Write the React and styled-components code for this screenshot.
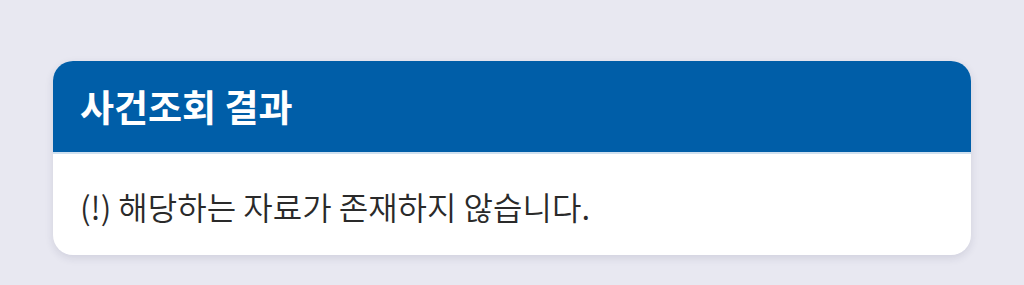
import React from "react";
import styled, { createGlobalStyle } from "styled-components";

const GlobalStyle = createGlobalStyle`
  html, body {
    margin: 0;
    padding: 0;
    background: #e8e8f1;
  }
  body {
    font-family: "Noto Sans CJK KR", "Noto Sans", sans-serif;
  }
`;

const Page = styled.div`
  height: 285px;
  box-sizing: border-box;
  padding: 61px 53px 0 53px;
`;

const Card = styled.section`
  background: #ffffff;
  border-radius: 20px;
  overflow: hidden;
  box-shadow: 0 3px 8px rgba(40, 40, 80, 0.12);
`;

const Header = styled.header`
  height: 91px;
  background: #005ea8;
  border-bottom: 2px solid #cfe0ef;
  display: flex;
  align-items: center;
  padding: 0 27px;
`;

const Title = styled.h2`
  margin: 0;
  color: #ffffff;
  font-size: 37px;
  font-weight: 700;
  letter-spacing: 0;
  line-height: 1;
`;

const Body = styled.div`
  height: 101px;
  display: flex;
  align-items: center;
  padding: 0 27px;
  box-sizing: border-box;
`;

const Message = styled.p`
  margin: 0;
  color: #2a2a2a;
  font-size: 32px;
  font-weight: 350;
  line-height: 1;
  padding-top: 2px;
`;

export default function App() {
  return (
    <>
      <GlobalStyle />
      <Page>
        <Card>
          <Header>
            <Title>사건조회 결과</Title>
          </Header>
          <Body>
            <Message>(!) 해당하는 자료가 존재하지 않습니다.</Message>
          </Body>
        </Card>
      </Page>
    </>
  );
}
